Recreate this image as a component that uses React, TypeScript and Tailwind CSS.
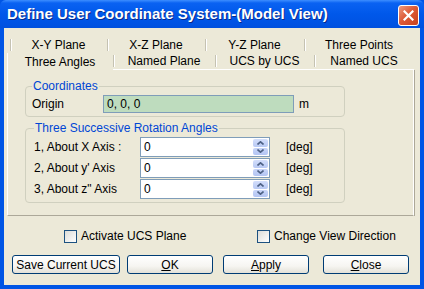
import React from "react";

function Sep() {
  return <div className="w-[2px] h-[12px] border-l border-l-[#C5C2B2] border-r border-r-white shrink-0" />;
}

function Tab1({ w, children }: { w: string; children: React.ReactNode }) {
  return (
    <div className={`${w} h-full flex items-center shrink-0`}>
      <Sep />
      <div className="flex-1 text-center leading-[16px] pr-[2px]">{children}</div>
    </div>
  );
}

function Tab2({ w, children }: { w: string; children: React.ReactNode }) {
  return (
    <div className={`${w} h-full flex items-center shrink-0 border-b border-b-white`}>
      <Sep />
      <div className="flex-1 text-center leading-[16px] pr-[2px]">{children}</div>
    </div>
  );
}

function Spinner() {
  return (
    <div className="w-[15px] my-[1px] mr-[1px] flex flex-col gap-[1px] shrink-0">
      <div className="flex-1 bg-[linear-gradient(to_bottom,#D3DEFB,#B8C9F4)] rounded-[2px] flex items-center justify-center">
        <svg width="7" height="4" viewBox="0 0 7 4">
          <polyline points="0.5,3.5 3.5,0.8 6.5,3.5" fill="none" stroke="#4D6185" strokeWidth="1.6" />
        </svg>
      </div>
      <div className="flex-1 bg-[linear-gradient(to_bottom,#C8D5F8,#B3C5F3)] rounded-[2px] flex items-center justify-center">
        <svg width="7" height="4" viewBox="0 0 7 4">
          <polyline points="0.5,0.5 3.5,3.2 6.5,0.5" fill="none" stroke="#4D6185" strokeWidth="1.6" />
        </svg>
      </div>
    </div>
  );
}

function AngleRow({ label }: { label: string }) {
  return (
    <div className="h-[20px] flex items-center">
      <div className="w-[106px] shrink-0 whitespace-pre">{label}</div>
      <div className="w-[130px] h-[20px] border border-[#7F9DB9] bg-white flex shrink-0">
        <div className="flex-1 pl-[3px] leading-[18px]">0</div>
        <Spinner />
      </div>
      <div className="ml-[16px]">[deg]</div>
    </div>
  );
}

function Check({ label }: { label: string }) {
  return (
    <div className="flex items-center h-[13px]">
      <div className="w-[13px] h-[13px] border border-[#1C5180] bg-[linear-gradient(135deg,#DCDCD7,#FFFFFF)] shrink-0" />
      <span className="ml-[4px] leading-[13px] whitespace-nowrap">{label}</span>
    </div>
  );
}

function Btn({ w, ml, children }: { w: string; ml: string; children: React.ReactNode }) {
  return (
    <div
      className={`${w} ${ml} h-[19px] shrink-0 border border-[#003C74] rounded-[3px] bg-[linear-gradient(to_bottom,#FFFFFF_0%,#F6F5F1_60%,#E3E1D8_100%)] flex items-center justify-center leading-[16px]`}
    >
      {children}
    </div>
  );
}

export default function App() {
  return (
    <div className="w-[424px] h-[289px] flex flex-col bg-[#0055E5] [font-family:'Liberation_Sans',Arial,sans-serif] text-[12px] text-black overflow-hidden">
      {/* title bar */}
      <div className="h-[28px] shrink-0 flex items-start pl-[7px] pr-[5px] rounded-t-[6px] bg-[linear-gradient(to_bottom,#3D8EFF_0px,#0A62F2_3px,#0058EA_14px,#0053E3_24px,#0050DE_28px)]">
        <span className="flex-1 mt-[5px] leading-[18px] text-white font-bold text-[15px] [text-shadow:1px_1px_0_#0A2A8A] whitespace-nowrap">
          Define User Coordinate System-(Model View)
        </span>
        <div className="mt-[5px] w-[21px] h-[21px] rounded-[3px] border border-white bg-[linear-gradient(135deg,#EC9A80_0%,#DD5B38_45%,#C8401C_100%)] flex items-center justify-center shrink-0">
          <svg width="11" height="11" viewBox="0 0 11 11">
            <path d="M1.5 1.5 L9.5 9.5 M9.5 1.5 L1.5 9.5" stroke="white" strokeWidth="2.2" strokeLinecap="square" />
          </svg>
        </div>
      </div>

      {/* body */}
      <div className="flex-1 mx-[4px] mb-[4px] bg-[#ECE9D8] flex flex-col">
        {/* tabs */}
        <div className="h-[42px] shrink-0 flex flex-col pt-[9px]">
          <div className="h-[16px] flex ml-[6px]">
            <Tab1 w="w-[97px]">X-Y Plane</Tab1>
            <Tab1 w="w-[98px]">X-Z Plane</Tab1>
            <Tab1 w="w-[99px]">Y-Z Plane</Tab1>
            <Tab1 w="w-[110px]">Three Points</Tab1>
          </div>
          <div className="h-[17px] flex ml-[3px]">
            <div className="w-[106px] h-full flex items-center justify-center leading-[16px] shrink-0 border-l border-l-white pr-[1px]">
              Three Angles
            </div>
            <Tab2 w="w-[102px]">Named Plane</Tab2>
            <Tab2 w="w-[99px]">UCS by UCS</Tab2>
            <Tab2 w="w-[100px]">Named UCS</Tab2>
          </div>
        </div>

        {/* panel */}
        <div className="ml-[3px] w-[407px] h-[146px] shrink-0 border-l border-l-white border-r border-r-white border-b border-b-[#ACA899] shadow-[1px_0_0_#ACA899] flex flex-col">
          <fieldset className="ml-[17px] mt-[9px] w-[320px] border border-[#D0D0BF] rounded-[4px] px-[6px] pb-[3px]">
            <legend className="px-[1px] leading-[14px] text-[#0046D5]">Coordinates</legend>
            <div className="mt-[2px] h-[18px] flex items-center">
              <div className="w-[71px] shrink-0">Origin</div>
              <div className="w-[191px] h-[18px] border border-[#7F9DB9] bg-[#BEDCBE] pl-[3px] leading-[16px] shrink-0">
                0, 0, 0
              </div>
              <div className="ml-[5px]">m</div>
            </div>
          </fieldset>

          <fieldset className="ml-[17px] mt-[4px] w-[320px] border border-[#D0D0BF] rounded-[4px] px-[8px] pb-[3px]">
            <legend className="px-[1px] leading-[14px] text-[#0046D5]">Three Successive Rotation Angles</legend>
            <div className="mt-[2px] flex flex-col gap-[1px]">
              <AngleRow label="1, About X Axis :" />
              <AngleRow label="2, About y' Axis" />
              <AngleRow label={'3, About z" Axis'} />
            </div>
          </fieldset>
        </div>

        {/* checkboxes */}
        <div className="mt-[14px] h-[13px] flex pl-[60px] shrink-0">
          <div className="w-[193px] shrink-0">
            <Check label="Activate UCS Plane" />
          </div>
          <Check label="Change View Direction" />
        </div>

        {/* buttons */}
        <div className="mt-[12px] flex pl-[8px] shrink-0">
          <Btn w="w-[108px]" ml="ml-0">Save Current UCS</Btn>
          <Btn w="w-[86px]" ml="ml-[7px]">
            <span><span className="underline">O</span>K</span>
          </Btn>
          <Btn w="w-[86px]" ml="ml-[10px]">
            <span><span className="underline">A</span>pply</span>
          </Btn>
          <Btn w="w-[86px]" ml="ml-[14px]">
            <span><span className="underline">C</span>lose</span>
          </Btn>
        </div>
      </div>
    </div>
  );
}
